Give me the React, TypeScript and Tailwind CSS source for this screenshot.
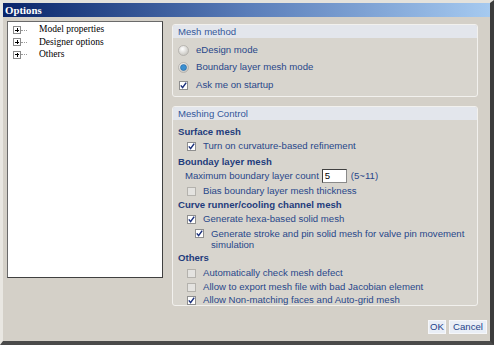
import React from 'react';

const LABEL = 'text-[#28478a]';
const HEAD = 'text-[#1f3c7c] font-bold';

const Check: React.FC<{ checked?: boolean }> = ({ checked }) => (
  <span
    className={
      'inline-flex shrink-0 items-center justify-center w-[9px] h-[9px] border ' +
      (checked ? 'bg-white border-[#8e8e8e]' : 'bg-[#e4e3e0] border-[#b4b2ad]')
    }
  >
    {checked && (
      <svg width="7" height="7" viewBox="0 0 7 7">
        <path d="M0.8 3.4 L2.6 5.6 L6.2 0.6" fill="none" stroke="#1a2f7a" strokeWidth="1.5" />
      </svg>
    )}
  </span>
);

const Radio: React.FC<{ checked?: boolean }> = ({ checked }) => (
  <svg width="11" height="11" viewBox="0 0 11 11" className="shrink-0">
    <defs>
      <radialGradient id={checked ? 'rOn' : 'rOff'} cx="0.4" cy="0.35" r="0.7">
        <stop offset="0" stopColor="#ffffff" />
        <stop offset="1" stopColor="#c4c2bc" />
      </radialGradient>
    </defs>
    <circle cx="5.5" cy="5.5" r="5" fill={`url(#${checked ? 'rOn' : 'rOff'})`} stroke="#aeaca7" strokeWidth="0.8" />
    {checked && <circle cx="5.5" cy="5.5" r="3" fill="#3a8fd0" stroke="#1f5f9e" strokeWidth="0.6" />}
  </svg>
);

const CheckRow: React.FC<{ checked?: boolean; indent: string; children: React.ReactNode; className?: string }> = ({
  checked,
  indent,
  children,
  className = '',
}) => (
  <div className={`flex items-center h-[14px] ${indent} ${className}`}>
    <Check checked={checked} />
    <span className={`ml-[7px] ${LABEL}`}>{children}</span>
  </div>
);

const TreeItem: React.FC<{ label: string }> = ({ label }) => (
  <div className="flex items-center h-[12.3px]">
    <span className="relative ml-[3px] w-[8px] h-[8px] border border-[#8a8a8a] bg-white flex items-center justify-center">
      <span className="absolute w-[4px] h-px bg-black" />
      <span className="absolute w-px h-[4px] bg-black" />
    </span>
    <span className="w-[6px] border-t border-dotted border-[#9a9a9a]" />
    <span className="ml-[12px] text-black">{label}</span>
  </div>
);

const GroupBox: React.FC<{ title: string; className?: string; children: React.ReactNode }> = ({
  title,
  className = '',
  children,
}) => (
  <div className={`rounded-[3px] border border-[#f2f1ee] bg-[#d8d5ce] ${className}`}>
    <div className="h-[13px] rounded-t-[2px] bg-[#e3e6ec] pl-[5px] flex items-center text-[#34579a]">{title}</div>
    {children}
  </div>
);

export default function App() {
  return (
    <div
      className="w-[494px] h-[345px] bg-[#d4d0c8] border-l-[3px] border-t-[3px] border-l-[#e9e7e2] border-t-[#e4e2dc] border-r-[4px] border-b-[4px] border-r-[#3c3c3c] border-b-[#4a4a4a] flex flex-col text-[9.6px] leading-none"
      style={{ fontFamily: '"Liberation Sans", Arial, sans-serif' }}
    >
      <div className="h-[14px] shrink-0 bg-gradient-to-r from-[#0a246a] via-[#5a7db9] to-[#a6caf0] flex items-center pl-[2px]">
        <span
          className="text-white font-bold text-[10.8px]"
          style={{ fontFamily: '"Liberation Serif", "Times New Roman", serif' }}
        >
          Options
        </span>
      </div>

      <div className="flex pl-[4px] pt-[4px]">
        <div
          className="w-[156px] h-[257px] shrink-0 bg-white border border-[#404040] border-l-[#6a6a6a] border-t-[#6a6a6a] pt-[2px] pl-[2px] text-[9.5px]"
          style={{ fontFamily: '"Liberation Serif", "Times New Roman", serif' }}
        >
          <TreeItem label="Model properties" />
          <TreeItem label="Designer options" />
          <TreeItem label="Others" />
        </div>

        <div className="ml-[9px] w-[318px] pt-[3px] flex flex-col">
          <GroupBox title="Mesh method" className="w-[306px] h-[73px]">
            <div className="pl-[5px] pt-[4px]">
              <div className="flex items-center h-[16px]">
                <Radio />
                <span className={`ml-[7px] ${LABEL}`}>eDesign mode</span>
              </div>
              <div className="flex items-center h-[16px] mt-[1px]">
                <Radio checked />
                <span className={`ml-[7px] ${LABEL}`}>Boundary layer mesh mode</span>
              </div>
              <div className="flex items-center h-[16px] mt-[2px] pl-[1px]">
                <Check checked />
                <span className={`ml-[8px] ${LABEL}`}>Ask me on startup</span>
              </div>
            </div>
          </GroupBox>

          <GroupBox title="Meshing Control" className="w-[306px] h-[200px] mt-[9px]">
            <div className="pl-[5px] pt-[5px]">
              <div className={`h-[14px] flex items-center ${HEAD}`}>Surface mesh</div>
              <CheckRow checked indent="pl-[9px]">Turn on curvature-based refinement</CheckRow>
              <div className={`h-[14px] flex items-center mt-[2px] ${HEAD}`}>Bounday layer mesh</div>
              <div className={`h-[14px] flex items-center pl-[7px] ${LABEL}`}>
                <span>Maximum boundary layer count</span>
                <span className="ml-[3px] w-[25px] h-[14px] bg-white border border-[#8a8a8a] border-l-[#404040] border-t-[#404040] flex items-center pl-[2px] text-black">
                  5
                </span>
                <span className="ml-[4px]">(5~11)</span>
              </div>
              <CheckRow indent="pl-[9px]" className="mt-[1px]">Bias boundary layer mesh thickness</CheckRow>
              <div className={`h-[14px] flex items-center ${HEAD}`}>Curve runner/cooling channel mesh</div>
              <CheckRow checked indent="pl-[9px]">Generate hexa-based solid mesh</CheckRow>
              <div className="flex items-start pl-[17px] pt-[3px]">
                <Check checked />
                <span className={`ml-[7px] ${LABEL} leading-[11px] -mt-[1px]`}>
                  Generate stroke and pin solid mesh for valve pin movement
                  <br />
                  simulation
                </span>
              </div>
              <div className={`h-[14px] flex items-center mt-[1px] ${HEAD}`}>Others</div>
              <CheckRow indent="pl-[9px]" className="mt-[1px]">Automatically check mesh defect</CheckRow>
              <CheckRow indent="pl-[9px]">Allow to export mesh file with bad Jacobian element</CheckRow>
              <CheckRow checked indent="pl-[9px]" className="-mt-[1px]">Allow Non-matching faces and Auto-grid mesh</CheckRow>
            </div>
          </GroupBox>

          <div className="flex justify-end pr-[3px] mt-[14px] gap-[3px]">
            <button className="h-[14px] w-[18px] bg-[#e9eef6] border border-[#f6f7fa] text-[#23428a] flex items-center justify-center">
              OK
            </button>
            <button className="h-[14px] w-[38px] bg-[#e9eef6] border border-[#f6f7fa] text-[#23428a] flex items-center justify-center">
              Cancel
            </button>
          </div>
        </div>
      </div>
    </div>
  );
}
